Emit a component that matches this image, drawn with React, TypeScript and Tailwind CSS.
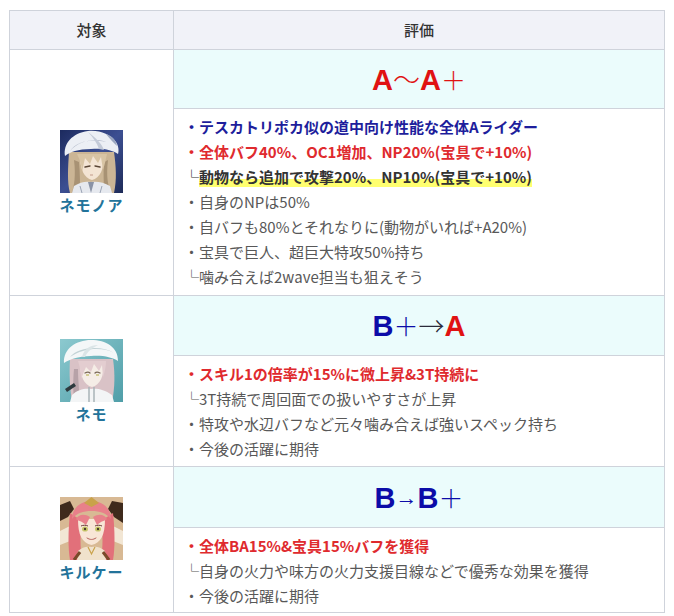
import React from "react";

const font = { fontFamily: '"Noto Sans CJK JP", "Noto Sans", sans-serif' };

function NemoNoaIcon() {
  return (
    <svg width="63" height="63" viewBox="0 0 63 63" className="block">
      <defs>
        <linearGradient id="nnbg" x1="0" y1="0" x2="1" y2="1">
          <stop offset="0" stopColor="#1c2a5e" />
          <stop offset="0.5" stopColor="#3c4f92" />
          <stop offset="1" stopColor="#1e2b58" />
        </linearGradient>
      </defs>
      <rect width="63" height="63" fill="url(#nnbg)" />
      <path d="M9 22 C8 38 7 52 10 63 L54 63 C57 50 56 36 54 22 Z" fill="#cbb595" />
      <path d="M14 30 C16 46 14 56 12 63 L20 63 C20 52 20 42 19 32 Z" fill="#a89274" />
      <path d="M48 30 C46 46 48 56 51 63 L44 63 C44 52 43 42 44 32 Z" fill="#a89274" />
      <path d="M20 24 C20 40 24 48 32 50 C40 48 44 40 44 24 Z" fill="#f3e4d4" />
      <path d="M17 24 C20 30 22 36 22 42 L25 28 L30 34 L33 26 L38 33 L41 27 L43 40 C45 34 46 28 47 24 Z" fill="#d8c4a4" />
      <path d="M25 37 L30 36 M35 36 L40 37" stroke="#5a4636" strokeWidth="1.4" strokeLinecap="round" />
      <path d="M30 45 L33 45" stroke="#c29a8a" strokeWidth="1" />
      <path d="M5 26 C3 14 12 3 28 1 C40 0 50 4 56 12 C60 18 58 24 58 24 C52 20 44 18 31 19 C18 19 10 22 5 26 Z" fill="#eceff5" />
      <path d="M10 21 C16 12 30 8 46 12 C36 8 20 10 10 21 Z" fill="#b0b8c8" />
      <path d="M28 2 C36 8 42 14 44 20 L39 19 C37 13 33 7 28 2 Z" fill="#c3cad8" />
      <path d="M46 4 C52 6 56 10 57 16 C53 12 50 9 46 4 Z" fill="#9aa6c0" />
      <path d="M14 56 C20 52 26 51 31 52 C36 51 44 52 50 56 L52 63 L12 63 Z" fill="#e6e9ef" />
      <path d="M28 52 L31 63 L34 52 Z" fill="#8a93a6" />
      <path d="M20 56 L22 63 M42 56 L40 63" stroke="#9aa3b4" strokeWidth="1" />
    </svg>
  );
}

function NemoIcon() {
  return (
    <svg width="63" height="63" viewBox="0 0 63 63" className="block">
      <defs>
        <linearGradient id="nmbg" x1="0" y1="0" x2="1" y2="1">
          <stop offset="0" stopColor="#8cc9cf" />
          <stop offset="1" stopColor="#4f9ea8" />
        </linearGradient>
      </defs>
      <rect width="63" height="63" fill="url(#nmbg)" />
      <path d="M10 20 C9 36 10 50 12 63 L52 63 C55 48 55 34 53 20 Z" fill="#d9c2c6" />
      <path d="M18 30 C18 44 20 54 19 63 L14 63 C13 50 13 40 14 30 Z" fill="#b7a2a8" />
      <path d="M20 22 C20 38 24 46 32 48 C40 46 44 38 44 22 Z" fill="#f5ede6" />
      <path d="M18 22 C20 28 21 34 21 40 L26 28 L31 33 L34 25 L39 32 L42 26 L43 38 C45 32 46 27 46 22 Z" fill="#e3cdd0" />
      <path d="M25 34 C27 33 29 33 30 34 M35 34 C36 33 38 33 40 34" stroke="#7a6a5a" strokeWidth="1.3" fill="none" strokeLinecap="round" />
      <path d="M26 36 L29 36 M36 36 L39 36" stroke="#c9c27a" strokeWidth="1.4" />
      <path d="M4 24 C3 10 16 1 31 1 C46 1 58 8 58 22 C52 18 42 16 31 17 C20 17 10 20 4 24 Z" fill="#f4f7f8" />
      <path d="M10 18 C18 8 42 6 54 14 C44 8 24 8 10 18 Z" fill="#c3d3d6" />
      <path d="M22 18 C24 10 30 6 38 6 C32 9 27 13 25 18 Z" fill="#dbe5e7" />
      <path d="M12 56 C18 50 26 49 31 50 C36 49 44 50 52 56 L54 63 L10 63 Z" fill="#f3f5f6" />
      <path d="M29 48 L29 63 M34 48 L34 63" stroke="#a9b4b8" strokeWidth="1.5" />
      <path d="M5 50 L14 44 L16 47 L7 53 Z" fill="#2e3a3e" />
    </svg>
  );
}

function CirceIcon() {
  return (
    <svg width="63" height="63" viewBox="0 0 63 63" className="block">
      <rect width="63" height="63" fill="#d8b994" />
      <path d="M0 8 L10 4 L14 12 L8 20 L0 24 Z" fill="#3f2a1c" />
      <path d="M63 6 L52 4 L48 12 L54 20 L63 26 Z" fill="#3f2a1c" />
      <path d="M0 34 L12 28 L10 44 L0 48 Z" fill="#f2e6d4" />
      <path d="M63 34 L51 28 L53 44 L63 48 Z" fill="#f2e6d4" />
      <path d="M10 16 C8 34 8 52 10 63 L22 63 C20 50 20 36 22 24 Z" fill="#e2707a" />
      <path d="M53 16 C55 34 55 52 53 63 L41 63 C43 50 43 36 41 24 Z" fill="#e2707a" />
      <path d="M18 22 C18 38 22 46 31.5 48 C41 46 45 38 45 22 Z" fill="#f8e6d6" />
      <path d="M12 22 C12 10 22 4 31.5 4 C41 4 51 10 51 22 C46 16 40 14 31.5 14 C23 14 17 16 12 22 Z" fill="#e8808a" />
      <path d="M16 22 C18 18 24 16 30 20 L26 28 C22 24 18 24 16 22 Z" fill="#e8808a" />
      <path d="M47 22 C45 18 39 16 33 20 L37 28 C41 24 45 24 47 22 Z" fill="#e8808a" />
      <path d="M24 6 L31.5 0 L39 6 L31.5 10 Z" fill="#c9a24a" />
      <ellipse cx="25" cy="32" rx="3" ry="2.6" fill="#c7c86a" />
      <ellipse cx="38" cy="32" rx="3" ry="2.6" fill="#c7c86a" />
      <circle cx="25" cy="32" r="1.2" fill="#4a3a2a" />
      <circle cx="38" cy="32" r="1.2" fill="#4a3a2a" />
      <path d="M21 29 C23 28 26 28 28 29 M35 29 C37 28 40 28 42 29" stroke="#6a3a3a" strokeWidth="1" fill="none" />
      <path d="M27 41 C30 43 33 43 36 41" stroke="#b4605a" strokeWidth="1" fill="none" strokeLinecap="round" />
      <path d="M18 54 C22 50 27 49 31.5 50 C36 49 41 50 45 54 L46 63 L17 63 Z" fill="#f0e2cc" />
      <path d="M20 55 L14 63 M43 55 L49 63" stroke="#7a4a2a" strokeWidth="3" />
      <path d="M28 50 L31.5 57 L35 50" stroke="#c9a24a" strokeWidth="1.2" fill="none" />
    </svg>
  );
}

type Line = { text: string; kind: "blue" | "red" | "mark" | "gray" };

function Lines({ lines }: { lines: Line[] }) {
  return (
    <div className="text-[15px] leading-[25px]">
      {lines.map((l, i) => {
        if (l.kind === "mark") {
          return (
            <div key={i} className="font-bold text-[#333333] whitespace-nowrap">
              └
              <span className="bg-[linear-gradient(transparent_62%,#ffff70_62%)]">{l.text}</span>
            </div>
          );
        }
        const cls =
          l.kind === "blue"
            ? "font-bold text-[#1e1e9c]"
            : l.kind === "red"
              ? "font-bold text-[#df2a2e]"
              : "text-[#585858]";
        return (
          <div key={i} className={cls + " whitespace-nowrap"}>
            {l.text}
          </div>
        );
      })}
    </div>
  );
}

function Servant({ icon, name }: { icon: React.ReactNode; name: string }) {
  return (
    <div className="flex flex-col items-center">
      {icon}
      <div className="mt-[2px] text-[15px] leading-[20px] font-bold text-[#23739a] tracking-[1px]">{name}</div>
    </div>
  );
}

const red = "text-[#e01212]";
const blue = "text-[#0c0ca8]";
const cjk = "font-['Noto_Sans_CJK_JP'] font-light";
const gradeFont = { fontFamily: '"Liberation Sans", "Noto Sans CJK JP", sans-serif' };

export default function App() {
  const rows = [
    {
      icon: <NemoNoaIcon />,
      name: "ネモノア",
      grade: (
        <>
          <span className={red + " font-bold"}>A</span>
          <span className={red + " " + cjk + " text-[27px]"}>〜</span>
          <span className={red + " font-bold"}>A</span>
          <span className={red + " " + cjk + " text-[25px]"}>＋</span>
        </>
      ),
      lines: [
        { text: "・テスカトリポカ似の道中向け性能な全体Aライダー", kind: "blue" },
        { text: "・全体バフ40%、OC1増加、NP20%(宝具で+10%)", kind: "red" },
        { text: "動物なら追加で攻撃20%、NP10%(宝具で+10%)", kind: "mark" },
        { text: "・自身のNPは50%", kind: "gray" },
        { text: "・自バフも80%とそれなりに(動物がいれば+A20%)", kind: "gray" },
        { text: "・宝具で巨人、超巨大特攻50%持ち", kind: "gray" },
        { text: "└噛み合えば2wave担当も狙えそう", kind: "gray" },
      ] as Line[],
      gradeH: "h-[59px]",
      textPad: "pt-[5px] pb-[6px]",
    },
    {
      icon: <NemoIcon />,
      name: "ネモ",
      grade: (
        <>
          <span className={blue + " font-bold"}>B</span>
          <span className={blue + " " + cjk + " text-[25px]"}>＋</span>
          <span className={"text-[#2a2a3a] " + cjk + " text-[26px]"}>→</span>
          <span className={red + " font-bold"}>A</span>
        </>
      ),
      lines: [
        { text: "・スキル1の倍率が15%に微上昇&3T持続に", kind: "red" },
        { text: "└3T持続で周回面での扱いやすさが上昇", kind: "gray" },
        { text: "・特攻や水辺バフなど元々噛み合えば強いスペック持ち", kind: "gray" },
        { text: "・今後の活躍に期待", kind: "gray" },
      ] as Line[],
      gradeH: "h-[60px]",
      textPad: "pt-[5px] pb-[5px]",
    },
    {
      icon: <CirceIcon />,
      name: "キルケー",
      grade: (
        <>
          <span className={blue + " font-bold"}>B</span>
          <span className={blue + " font-normal text-[22px] align-[3px]"}>→</span>
          <span className={blue + " font-bold"}>B</span>
          <span className={blue + " " + cjk + " text-[25px]"}>＋</span>
        </>
      ),
      lines: [
        { text: "・全体BA15%&宝具15%バフを獲得", kind: "red" },
        { text: "└自身の火力や味方の火力支援目線などで優秀な効果を獲得", kind: "gray" },
        { text: "・今後の活躍に期待", kind: "gray" },
      ] as Line[],
      gradeH: "h-[61px]",
      textPad: "pt-[5px] pb-[4px]",
    },
  ];

  return (
    <div className="w-[674px] h-[616px] bg-white pt-[10px] pl-[9px]" style={font}>
      <table className="w-[655px] table-fixed border-collapse border border-[#cfd3db]">
        <colgroup>
          <col className="w-[164px]" />
          <col className="w-[491px]" />
        </colgroup>
        <thead>
          <tr className="h-[39px] bg-[#f1f2f8]">
            <th className="border border-[#cfd3db] text-[15px] font-medium text-[#333]">対象</th>
            <th className="border border-[#cfd3db] text-[15px] font-medium text-[#333]">評価</th>
          </tr>
        </thead>
        <tbody>
          {rows.map((r, i) => (
            <React.Fragment key={i}>
              <tr>
                <td rowSpan={2} className="border border-[#cfd3db] align-middle">
                  <Servant icon={r.icon} name={r.name} />
                </td>
                <td
                  className={
                    r.gradeH +
                    " border border-[#cfd3db] bg-[#ebfcfc] text-center text-[29px] leading-[32px] align-middle whitespace-nowrap"
                  }
                  style={gradeFont}
                >
                  {r.grade}
                </td>
              </tr>
              <tr>
                <td className={"border border-[#cfd3db] pl-[10px] pr-2 align-top " + r.textPad}>
                  <Lines lines={r.lines} />
                </td>
              </tr>
            </React.Fragment>
          ))}
        </tbody>
      </table>
    </div>
  );
}
